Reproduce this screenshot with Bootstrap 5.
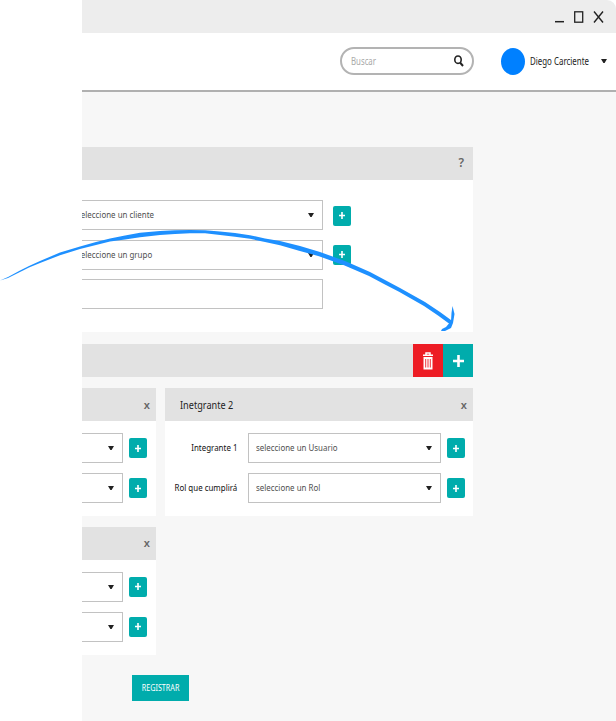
<!DOCTYPE html>
<html lang="es">
<head>
<meta charset="utf-8">
<meta name="viewport" content="width=device-width, initial-scale=1">
<title>Registro de integrantes</title>
<link href="https://cdn.jsdelivr.net/npm/bootstrap@5.3.0/dist/css/bootstrap.min.css" rel="stylesheet">
<style>
body{font-family:"Noto Sans","Open Sans",sans-serif;font-size:9px;line-height:14px;color:#333;background:#fff;overflow:hidden}
.stage{width:616px;height:721px}
.window{margin-left:82px;width:534px;height:721px;background:#f7f7f7}
.titlebar{height:33px;background:#ededed;border-top-right-radius:9px;padding-right:12px;gap:8px}
.corner{background:#fff}
.topbar{height:59px;background:#fff;border-bottom:2px solid #b0b0b0;padding:0 9px 1px 0}
.search{width:134px;height:28px;border:2px solid #b3b3b3;border-radius:14px;padding:0 8px 0 9px;margin-right:27px;background:#fff}
.avatar{width:24px;height:27px;background:#0080ff;border-radius:50%;margin-right:5px}
.t{display:inline-block;transform:scaleX(.88);transform-origin:0 50%;white-space:nowrap}
.t-search{font-size:10px;transform:scaleX(.78);color:#aaa}
.t-user{font-size:10px;transform:scaleX(.79);width:71px;color:#222}
.content{width:391px;padding-top:55px}
.head{height:33px;background:#e2e2e2}
.panel-main{height:152px;padding-top:20px}
.line{gap:10px;height:30px;margin-bottom:9.5px}
.field{height:30px;border:1px solid #c2c2c2;background:#fff;color:#505050;overflow:hidden}
.cut{border-left:0}
.field-main{width:241px;padding-right:8px}
.t-client{margin-left:-5px}
.add{width:18px;height:20px;background:#00acac;border-radius:2px;border:0;padding:0}
.line .add{margin-top:1px}
.bar-btn{width:30px;height:33px;border:0;padding:0}
.del{background:#ed1c24}.plus{background:#00acac}
.strip{height:33px;margin-top:12px;background:#e2e2e2}
.pair{gap:9px;margin-top:11px}
.member{background:#fff;height:128px}
.third{margin-top:10.5px}
.side{width:74px}.full{width:308px}
.rows{padding-top:12px}
.mrow{height:30px;margin-bottom:10px}
.side .field{width:41px;padding-right:8px;margin-right:6px}
.full .field{width:193px;padding:0 8px 0 7px;margin-right:6px}
.lab{width:72px;margin-right:11px;color:#111}
.lab .t{transform-origin:100% 50%}
.x{font-size:11px;font-weight:600;color:#666;margin-right:6px}
.help{font-size:12px;margin-right:9px;line-height:12px;padding-bottom:1px}
.t-title{font-size:11px;transform:scaleX(.8);margin-left:15px;color:#222}
.t-title{transform:scaleX(.83)}
.register{width:57px;height:26px;margin:20px 0 0 50px;background:#00acac;color:#fff;border:0;padding:0;font-size:9px}
.register .t{transform:scaleX(.8);transform-origin:50% 50%}
.sketch{left:0;top:0;pointer-events:none}
svg{display:block;flex:none}
</style>
<script src="https://cdn.jsdelivr.net/npm/bootstrap@5.3.0/dist/js/bootstrap.bundle.min.js"></script>
</head>
<body>
<svg class="d-none">
<symbol id="caret" viewBox="0 0 6 4"><path d="M0 0H6L3.6 4H2.4Z" fill="#222"/></symbol>
<symbol id="add" viewBox="0 0 6 7"><path d="M3 0V7M0 3.5H6" stroke="#fff" stroke-width="1.6"/></symbol>
</svg>
<div class="stage position-relative overflow-hidden">
<div class="window">
  <div class="corner"><div class="titlebar d-flex justify-content-end align-items-center">
    <svg width="9" height="12"><path d="M0 10.7H9" stroke="#222" stroke-width="1.5"/></svg>
    <svg width="13" height="12"><rect x="2.7" y=".8" width="8" height="10.4" fill="none" stroke="#222" stroke-width="1.3"/></svg>
    <svg width="11" height="12"><path d="M1 .5L10 11.5M10 .5L1 11.5" stroke="#222" stroke-width="1.4"/></svg>
  </div></div>
  <header class="topbar d-flex justify-content-end align-items-center">
    <div class="search d-flex align-items-center justify-content-between"><span class="t t-search">Buscar</span>
      <svg width="10" height="12"><ellipse cx="4" cy="4.7" rx="3.2" ry="3.7" fill="none" stroke="#222" stroke-width="1.6"/><path d="M6 7.5L9 11" stroke="#222" stroke-width="2"/></svg></div>
    <div class="avatar"></div><span class="t t-user">Diego Carciente</span><svg width="6" height="4"><use href="#caret"/></svg>
  </header>
  <main class="content">
    <section>
      <div class="head d-flex align-items-center justify-content-end"><span class="x help">?</span></div>
      <div class="panel-main bg-white">
        <div class="line d-flex align-items-center"><div class="field cut field-main d-flex align-items-center justify-content-between"><span class="t t-client">seleccione un cliente</span><svg width="6" height="4"><use href="#caret"/></svg></div><button class="add d-flex align-items-center justify-content-center"><svg width="6" height="7"><use href="#add"/></svg></button></div>
        <div class="line d-flex align-items-center"><div class="field cut field-main d-flex align-items-center justify-content-between"><span class="t t-client">seleccione un grupo</span><svg width="6" height="4"><use href="#caret"/></svg></div><button class="add mt-0 d-flex align-items-center justify-content-center"><svg width="6" height="7"><use href="#add"/></svg></button></div>
        <div class="line d-flex"><div class="field cut field-main"></div></div>
      </div>
    </section>
    <div class="strip d-flex justify-content-end">
      <button class="bar-btn del d-flex align-items-center justify-content-center"><svg width="12" height="18" viewBox="0 0 12 18"><path d="M1 3.2H11M4 2.5V1H8V2.5" fill="none" stroke="#fff" stroke-width="1.5"/><path d="M1.5 5H10.5V17.5H1.5Z" fill="#fff"/><path d="M3.7 7V15.5M6 7V15.5M8.3 7V15.5" stroke="#ed1c24" stroke-width=".9"/></svg></button>
      <button class="bar-btn plus d-flex align-items-center justify-content-center"><svg width="11" height="12"><path d="M5.5 0V12M0 6H11" stroke="#fff" stroke-width="2.6"/></svg></button>
    </div>
    <div class="pair d-flex">
      <section class="member side">
        <div class="head d-flex align-items-center justify-content-end"><span class="x">x</span></div>
        <div class="rows">
          <div class="mrow d-flex align-items-center"><div class="field cut d-flex align-items-center justify-content-end"><svg width="6" height="4"><use href="#caret"/></svg></div><button class="add d-flex align-items-center justify-content-center"><svg width="6" height="7"><use href="#add"/></svg></button></div>
          <div class="mrow d-flex align-items-center"><div class="field cut d-flex align-items-center justify-content-end"><svg width="6" height="4"><use href="#caret"/></svg></div><button class="add d-flex align-items-center justify-content-center"><svg width="6" height="7"><use href="#add"/></svg></button></div>
        </div>
      </section>
      <section class="member full">
        <div class="head d-flex align-items-center justify-content-between"><span class="t t-title">Inetgrante 2</span><span class="x">x</span></div>
        <div class="rows">
          <div class="mrow d-flex align-items-center"><span class="lab d-flex justify-content-end"><span class="t">Integrante 1</span></span><div class="field d-flex align-items-center justify-content-between"><span class="t">seleccione un Usuario</span><svg width="6" height="4"><use href="#caret"/></svg></div><button class="add d-flex align-items-center justify-content-center"><svg width="6" height="7"><use href="#add"/></svg></button></div>
          <div class="mrow d-flex align-items-center"><span class="lab d-flex justify-content-end"><span class="t">Rol que cumplirá</span></span><div class="field d-flex align-items-center justify-content-between"><span class="t">seleccione un Rol</span><svg width="6" height="4"><use href="#caret"/></svg></div><button class="add d-flex align-items-center justify-content-center"><svg width="6" height="7"><use href="#add"/></svg></button></div>
        </div>
      </section>
    </div>
    <section class="member side third">
      <div class="head d-flex align-items-center justify-content-end"><span class="x">x</span></div>
      <div class="rows">
        <div class="mrow d-flex align-items-center"><div class="field cut d-flex align-items-center justify-content-end"><svg width="6" height="4"><use href="#caret"/></svg></div><button class="add d-flex align-items-center justify-content-center"><svg width="6" height="7"><use href="#add"/></svg></button></div>
        <div class="mrow d-flex align-items-center"><div class="field cut d-flex align-items-center justify-content-end"><svg width="6" height="4"><use href="#caret"/></svg></div><button class="add d-flex align-items-center justify-content-center"><svg width="6" height="7"><use href="#add"/></svg></button></div>
      </div>
    </section>
    <button class="register"><span class="t">REGISTRAR</span></button>
  </main>
</div>
<svg class="sketch position-absolute" width="616" height="721" fill="#1e90ff"><path d="M0 280.5L8 277L20 270.5L29 266L40 261L60 252.5L80 246.5L96 242L110 238.5L125 235.5L140 232.8L160 231L175 230.2L190 230L205 230.2L220 231.5L235 233L250 235.2L265 238.5L280 241L300 246L320 252L345 261L370 272L385 280L400 288L425 302L440 312L453 321.5L451 325L438 315.5L424 306L399 291.8L384 284L369 276L344 265.2L319 256.2L299 250.8L280 245.2L265 242L250 238.8L235 236.8L220 235L205 233.2L190 233.2L175 234L160 235L140 237.2L125 239.5L110 241.5L96 245L80 249L60 255.2L40 263L29 267.5L20 272L8 278Z"/><path d="M452.5 306L451.5 313L451 321L446 327L442 329L441 331L445 331L451 328L453 323L454.5 314Z"/></svg>
</div>
</body>
</html>
